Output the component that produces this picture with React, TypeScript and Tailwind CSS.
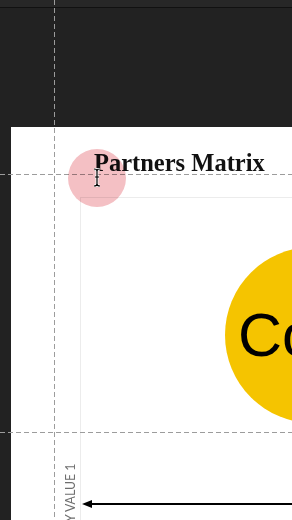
import React from 'react';

// dashed guide lines drawn by the design tool over the canvas
const Guide = ({ vertical, pos }: { vertical?: boolean; pos: number }) =>
  vertical ? (
    <div
      className="absolute top-0 bottom-0 w-px bg-[linear-gradient(to_bottom,#9c9c9c_62%,transparent_0)] bg-[length:1px_8px] pointer-events-none"
      style={{ left: pos }}
    />
  ) : (
    <div
      className="absolute left-0 right-0 h-px bg-[linear-gradient(to_right,#9c9c9c_62%,transparent_0)] bg-[length:8px_1px] pointer-events-none"
      style={{ top: pos }}
    />
  );

export default function App() {
  return (
    <div className="relative w-[292px] h-[520px] overflow-hidden bg-[#222222]">
      {/* toolbar edge */}
      <div className="h-[8px] bg-[#272727] border-b border-[#111111]" />

      {/* artboard */}
      <div className="pt-[119px] pl-[11px]">
        <div className="relative flex flex-col bg-white h-[400px] w-[300px] pt-[24px]">
          <h1
            className="pl-[83px] h-[24px] text-[24.5px] font-bold leading-none text-[#111] whitespace-nowrap"
            style={{ fontFamily: '"Liberation Serif", "DejaVu Serif", serif' }}
          >
            Partners Matrix
          </h1>

          {/* chart frame */}
          <div className="relative flex-1 mt-[22px] ml-[69px] border-l border-t border-[#ececec]">
            <div className="absolute left-[144px] top-[49px] w-[176px] h-[176px] rounded-full bg-[#f5c400] flex items-center">
              <span
                className="pl-[13px] text-[61px] leading-none text-black"
                style={{ fontFamily: '"Liberation Sans", Arial, sans-serif' }}
              >
                Co
              </span>
            </div>

            {/* x axis arrow */}
            <div className="absolute left-[1px] right-0 top-[302px] h-[8px] flex items-center">
              <svg width="10" height="8" viewBox="0 0 10 8" className="shrink-0">
                <path d="M0 4 L10 0 L10 8 Z" fill="#000" />
              </svg>
              <div className="flex-1 h-[2px] bg-black" />
            </div>
          </div>

          {/* y axis label */}
          <div
            className="absolute left-[52px] top-[395px] origin-top-left -rotate-90 scale-x-[0.88] text-[14px] leading-none text-[#6e6e6e] whitespace-nowrap"
            style={{ fontFamily: 'Lato, "Open Sans", sans-serif' }}
          >
            Y VALUE 1
          </div>
        </div>
      </div>

      {/* guides */}
      <Guide vertical pos={54} />
      <Guide pos={174} />
      <Guide pos={432} />

      {/* click highlight + cursor */}
      <div className="absolute left-[68px] top-[149px] w-[58px] h-[58px] rounded-full bg-[#f4c0c4] mix-blend-multiply pointer-events-none" />
      <svg className="absolute left-[92px] top-[168px] pointer-events-none" width="10" height="19" viewBox="0 0 10 19">
        <path d="M2 1 Q5 1 5 3 Q5 1 8 1 M5 3 L5 16 Q5 18 2 18 M5 16 Q5 18 8 18 M3 9 L7 9" stroke="#fff" strokeWidth="2.8" fill="none" />
        <path d="M2 1 Q5 1 5 3 Q5 1 8 1 M5 3 L5 16 Q5 18 2 18 M5 16 Q5 18 8 18 M3 9 L7 9" stroke="#000" strokeWidth="1.2" fill="none" />
      </svg>
    </div>
  );
}
